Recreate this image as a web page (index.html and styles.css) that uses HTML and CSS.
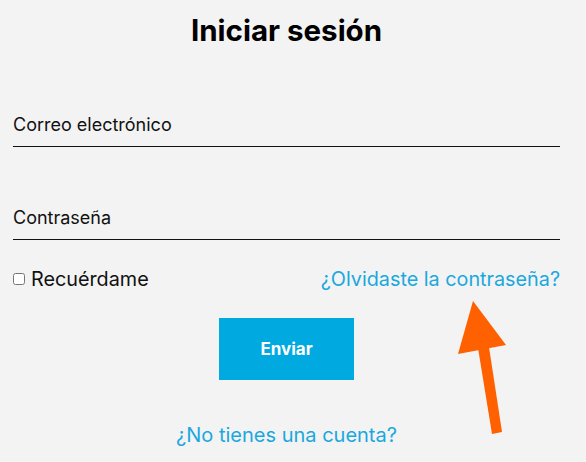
FILE: index.html
```html
<!DOCTYPE html>
<html lang="es">
<head>
<meta charset="utf-8">
<title>Iniciar sesión</title>
<link rel="stylesheet" href="styles.css">
</head>
<body>
<main class="page">
  <h1 class="title">Iniciar sesión</h1>
  <form class="form">
    <label class="field">
      <span class="field-label">Correo electrónico</span>
    </label>
    <label class="field">
      <span class="field-label">Contraseña</span>
    </label>
    <div class="row">
      <label class="remember"><input type="checkbox" class="check"> Recuérdame</label>
      <a class="link forgot" href="#">¿Olvidaste la contraseña?</a>
    </div>
    <div class="actions">
      <button type="button" class="btn">Enviar</button>
    </div>
    <div class="signup">
      <a class="link" href="#">¿No tienes una cuenta?</a>
    </div>
  </form>
  <svg class="arrow" width="60" height="140" viewBox="0 0 60 140">
    <polygon points="15,1 0,54 48,45" fill="#ff6000"/>
    <polygon points="20,48 31,47 44,132 34,134" fill="#ff6000"/>
  </svg>
</main>
</body>
</html>
```
FILE: styles.css
```css
html, body {
  margin: 0;
  padding: 0;
  background: #f3f3f3;
}
body {
  font-family: Inter, "Liberation Sans", sans-serif;
  color: #111;
}
.page {
  position: relative;
  width: 586px;
  height: 462px;
  overflow: hidden;
}
.title {
  margin: 0;
  padding: 12px 26px 0 13px;
  text-align: center;
  font-size: 29.5px;
  font-weight: 700;
  line-height: 36px;
  color: #000;
}
.form {
  padding: 0 26px 0 13px;
}
.field {
  display: flex;
  align-items: flex-end;
  height: 54px;
  border-bottom: 1.5px solid #111;
  margin-top: 45px;
  padding-bottom: 10px;
  box-sizing: border-box;
}
.field + .field {
  margin-top: 39px;
}
.field-label {
  font-size: 18px;
  line-height: 22px;
}
.row {
  display: flex;
  justify-content: space-between;
  align-items: center;
  margin-top: 27px;
  font-size: 19.8px;
  line-height: 24px;
}
.remember {
  display: flex;
  align-items: center;
  gap: 6px;
}
.check {
  margin: 0;
  width: 12px;
  height: 12px;
}
.link {
  color: #1aa8de;
  text-decoration: none;
}
.actions {
  display: flex;
  justify-content: center;
  margin-top: 27px;
}
.btn {
  width: 135px;
  height: 62px;
  background: #00a9e0;
  color: #fff;
  border: none;
  font-family: Inter, "Liberation Sans", sans-serif;
  font-size: 17px;
  font-weight: 700;
}
.signup {
  display: flex;
  justify-content: center;
  margin-top: 43px;
  font-size: 20px;
  line-height: 24px;
}
.arrow {
  position: absolute;
  left: 458px;
  top: 300px;
}
```
